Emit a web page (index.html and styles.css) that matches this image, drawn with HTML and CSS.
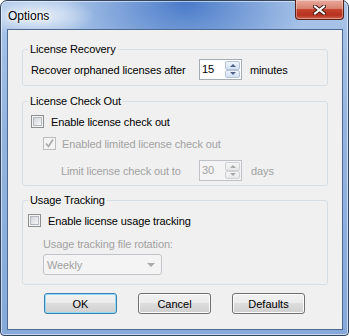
FILE: index.html
```html
<!DOCTYPE html>
<html lang="en">
<head>
    <meta charset="UTF-8">
    <title>Options</title>
    <link rel="stylesheet" href="styles.css">
</head>
<body>

    <div class="window">
        <div class="titlebar">
            <span class="title">Options</span>
            <button class="close" title="Close">
                <svg width="13" height="10" viewBox="0 0 13 10">
                    <path d="M2 1.5 L11 8.5 M11 1.5 L2 8.5" stroke="#3b1a16" stroke-width="4" stroke-linecap="square"/>
                    <path d="M2 1.5 L11 8.5 M11 1.5 L2 8.5" stroke="#ffffff" stroke-width="2" stroke-linecap="square"/>
                </svg>
            </button>
        </div>

        <div class="client">
            <fieldset class="group g-recovery">
                <legend>License Recovery</legend>
                <div class="row row-spin">
                    <span class="label-wide">Recover orphaned licenses after</span>
                    <div class="spin">
                        <span class="spin-val">15</span>
                        <span class="spin-btns"><i class="up"></i><i class="down"></i></span>
                    </div>
                    <span class="unit">minutes</span>
                </div>
            </fieldset>

            <fieldset class="group g-checkout">
                <legend>License Check Out</legend>
                <div class="row row-check">
                    <span class="checkbox"><span class="box"></span></span>
                    <span class="check-text">Enable license check out</span>
                </div>
                <div class="row row-check row-sub disabled">
                    <span class="checkbox checked">
                        <svg width="9" height="9" viewBox="0 0 9 9"><path d="M1 4.5 L3.5 7.5 L8 0.5" fill="none" stroke="#a8a8a8" stroke-width="1.6"/></svg>
                    </span>
                    <span class="check-text sub-text">Enabled limited license check out</span>
                </div>
                <div class="row row-spin row-limit disabled">
                    <span class="label-limit">Limit license check out to</span>
                    <div class="spin">
                        <span class="spin-val">30</span>
                        <span class="spin-btns"><i class="up"></i><i class="down"></i></span>
                    </div>
                    <span class="unit unit-days">days</span>
                </div>
            </fieldset>

            <fieldset class="group g-usage">
                <legend>Usage Tracking</legend>
                <div class="row row-check row-usage">
                    <span class="checkbox"><span class="box"></span></span>
                    <span class="check-text">Enable license usage tracking</span>
                </div>
                <div class="field-label disabled">Usage tracking file rotation:</div>
                <div class="select disabled">
                    <span>Weekly</span>
                    <i class="caret"></i>
                </div>
            </fieldset>

            <div class="buttons">
                <button class="btn default">OK</button>
                <button class="btn">Cancel</button>
                <button class="btn">Defaults</button>
            </div>
        </div>
    </div>

</body>
</html>
```

FILE: styles.css
```css
* { box-sizing: border-box; }
body { margin: 0; font-family: "Liberation Sans", Arial, sans-serif; font-size: 11px; letter-spacing: -0.12px; color: #000; }

.window {
    width: 349px; height: 336px;
    border: 1px solid #34465e; border-radius: 7px 7px 4px 4px;
    padding: 0 5px 5px 6px;
    display: flex; flex-direction: column;
    background:
        radial-gradient(60px 20px at 35px 15px, rgba(255,255,255,0.8), rgba(255,255,255,0)),
        radial-gradient(120px 70px at 185px 2px, #4a7bc9, rgba(74,123,201,0)),
        linear-gradient(#a9c4e8, #93b4e0 40%, #86a9da);
    box-shadow: inset 0 0 0 1px rgba(255,255,255,0.55);
}

.titlebar { height: 28px; display: flex; align-items: flex-start; }
.title { font-size: 12px; line-height: 14px; letter-spacing: 0; padding: 8px 0 0 1px; text-shadow: 0 0 6px #fff, 0 0 3px #fff; }
.close {
    margin: -1px -1px 0 auto;
    width: 49px; height: 20px; padding: 0;
    border: 1px solid #5b2019; border-top: none; border-radius: 0 0 4px 4px;
    background: linear-gradient(#e9ab9e, #d98270 45%, #c4442d 50%, #b7301e 80%, #d0664f);
    box-shadow: inset 0 0 0 1px rgba(255,255,255,0.35);
    display: flex; align-items: center; justify-content: center;
}

.client {
    flex: 1;
    background: #f0f0f0;
    border: 1px solid #4c6a92;
    padding: 13px 14px 0 14px;
}

.group { margin: 0; padding: 0; min-width: 0; border: 1px solid #d5dfe5; border-radius: 3px; }
.group legend { margin-left: 5px; padding: 0 2px; line-height: 13px; }
.g-recovery { padding: 3px 0 5px 0; }
.g-checkout { margin-top: 9px; padding: 5px 0 4px 0; }
.g-usage { margin-top: 8px; padding: 5px 0 9px 0; }

.row { display: flex; align-items: center; }
.row-spin { height: 21px; padding-left: 8px; }
.row-check { height: 17px; padding-left: 8px; }
.row-sub { margin-top: 5px; padding-left: 20px; }
.row-limit { margin-top: 8px; padding-left: 38px; }
.row-usage { padding-left: 5px; }

.label-wide { width: 168px; }
.label-limit { width: 138px; }
.unit { margin-left: 8px; }
.unit-days { margin-left: 9px; }
.check-text { margin-left: 7px; }
.sub-text { margin-left: 6px; }

.disabled { color: #a2a2a2; }

.checkbox {
    width: 13px; height: 13px; flex: none;
    border: 1px solid #8e8f8f; background: #f4f4f4;
    padding: 1px;
    display: flex; align-items: center; justify-content: center;
}
.checkbox .box {
    width: 9px; height: 9px;
    border: 1px solid #b5bac1;
    background: linear-gradient(135deg, #d0d4d9, #f7f7f7);
}
.checkbox.checked { border-color: #bdbdbd; background: #f4f4f4; }

.spin {
    width: 43px; height: 21px; flex: none;
    border: 1px solid #a6acb4; background: #fff;
    display: flex; padding: 1px 1px 1px 0;
}
.spin-val { flex: 1; padding-left: 2px; line-height: 17px; }
.spin-btns { width: 15px; display: flex; flex-direction: column; }
.spin-btns i {
    flex: 1; display: flex; align-items: center; justify-content: center;
    border: 1px solid #b6c3d6; border-radius: 2px;
    background: linear-gradient(#eef3fb, #d3e0f2);
}
.spin-btns i::after { content: ""; border-left: 3px solid transparent; border-right: 3px solid transparent; }
.spin-btns .up::after { border-bottom: 3px solid #4e6287; }
.spin-btns .down::after { border-top: 3px solid #4e6287; }

.disabled .spin { border-color: #bfc2c6; background: #f4f4f4; }
.disabled .spin-btns i { border-color: #cfd1d4; background: linear-gradient(#f6f6f6, #e8e8e8); }
.disabled .spin-btns .up::after { border-bottom-color: #a8a8a8; }
.disabled .spin-btns .down::after { border-top-color: #a8a8a8; }

.field-label { margin-top: 9px; padding-left: 20px; line-height: 13px; }

.select {
    margin: 3px 0 0 20px;
    width: 119px; height: 21px;
    border: 1px solid #c0c3c7; border-radius: 3px;
    background: #f4f4f4;
    display: flex; align-items: center; justify-content: space-between;
    padding: 0 6px 0 3px;
}
.caret { border-left: 4px solid transparent; border-right: 4px solid transparent; border-top: 4px solid #a9a9a9; }

.buttons { display: flex; gap: 21px; margin-top: 8px; padding-left: 22px; }
.btn {
    width: 73px; height: 21px; padding: 0;
    font-family: "Liberation Sans", Arial, sans-serif; font-size: 11px; color: #000;
    border: 1px solid #707070; border-radius: 3px;
    background: linear-gradient(#f2f2f2, #ebebeb 50%, #dddddd 50%, #cfcfcf);
    box-shadow: inset 0 0 0 1px #fbfbfb;
}
.btn.default { border-color: #3c7fb1; box-shadow: inset 0 0 0 1px #8fdcf8; }
```
